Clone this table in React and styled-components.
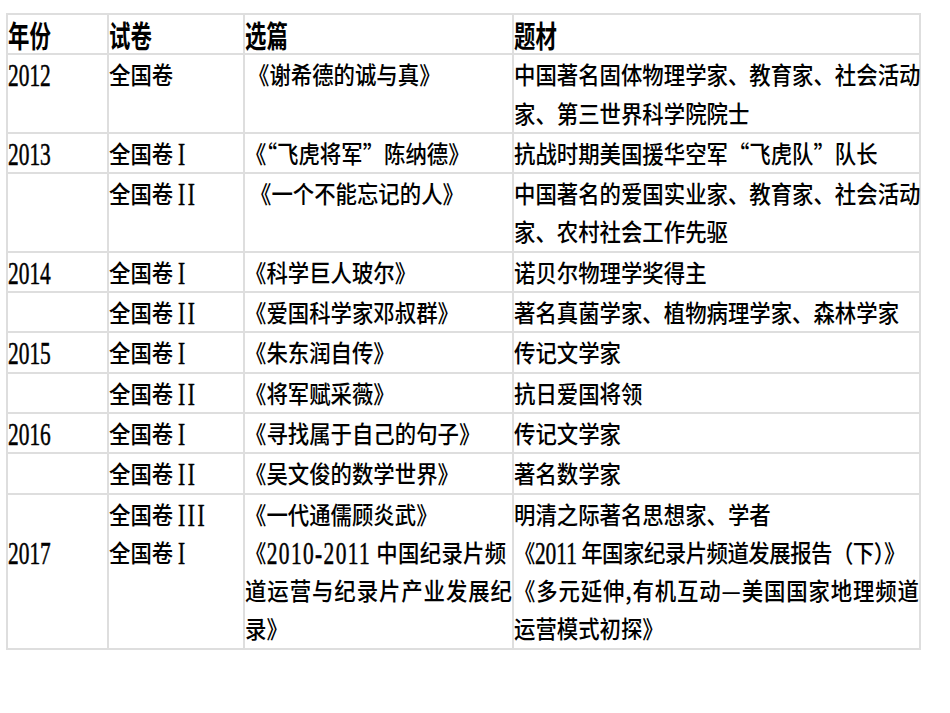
import React from 'react';
import styled, { createGlobalStyle, css } from 'styled-components';

const LH = 38.3;
const BORDER = '#dedede';

const Global = createGlobalStyle`
  html, body { margin: 0; padding: 0; background: #fff; }
  body {
    font-family: "Noto Sans CJK SC", "Liberation Serif", sans-serif;
    color: #000;
  }
  * { box-sizing: border-box; }
`;

const Page = styled.div`
  width: 950px;
  min-height: 713px;
  padding: 13px 0 0 6px;
`;

const Table = styled.table`
  border-collapse: separate;
  border-spacing: 0;
  table-layout: fixed;
  width: 915px;
  font-size: 21.4px;
  line-height: ${LH}px;
`;

const Cell = styled.td`
  border-right: 2px solid ${BORDER};
  border-bottom: 2px solid ${BORDER};
  &:first-child { border-left: 2px solid ${BORDER}; }
  padding: ${p => (p.$skip ? p.$skip * LH : 0)}px 0 0 ${p => p.$indent || 0}px;
  vertical-align: top;
  text-align: left;
  font-weight: 500;
  overflow: visible;
`;

const HeadCell = styled(Cell).attrs({ as: 'th' })`
  border-top: 2px solid ${BORDER};
  width: ${p => p.$w}px;
`;

const HeadText = styled.span`
  display: inline-block;
  line-height: 1;
  font-weight: 700;
  transform: scaleY(1.4);
`;

const Line = styled.div`
  white-space: nowrap;
  transform: scaleY(1.12);
  ${p => p.$justify && css`
    white-space: normal;
    text-align: justify;
    text-align-last: justify;
  `}
  ${p => p.$space && css`letter-spacing: ${p.$space}px;`}
`;

const Latin = styled.span`
  display: inline-block;
  font-family: "Liberation Serif", serif;
  font-weight: 400;
  line-height: 1;
  transform: scaleY(1.33);
  -webkit-text-stroke: 0.35px #000;
  letter-spacing: ${p => p.$track || 0}px;
`;

function renderText(text, track) {
  const parts = text.split(/([0-9][0-9\-]*|I+)/g);
  return parts.map((part, i) => {
    if (!part) return null;
    if (/^[0-9]/.test(part)) return <Latin key={i} $track={track}>{part}</Latin>;
    if (/^I+$/.test(part)) return <Latin key={i} $track={part.length > 1 ? 2.6 : 0}>{part}</Latin>;
    return <React.Fragment key={i}>{part}</React.Fragment>;
  });
}

function Lines({ items }) {
  return items.map((item, i) => {
    const it = typeof item === 'string' ? { t: item } : item;
    return (
      <Line key={i} $justify={it.j} $space={it.sp}>
        {renderText(it.t, it.tr)}
      </Line>
    );
  });
}

const headers = [
  { t: '年份', w: 103 },
  { t: '试卷', w: 136 },
  { t: '选篇', w: 269 },
  { t: '题材', w: 407 },
];

const rows = [
  { year: '2012', paper: ['全国卷'], piece: ['《谢希德的诚与真》'], pi: 3,
    topic: ['中国著名固体物理学家、教育家、社会活动', '家、第三世界科学院院士'] },
  { year: '2013', paper: ['全国卷 I'], piece: ['《“飞虎将军”陈纳德》'],
    topic: ['抗战时期美国援华空军“飞虎队”队长'] },
  { year: '', paper: ['全国卷 II'], piece: ['《一个不能忘记的人》'], pi: 5,
    topic: ['中国著名的爱国实业家、教育家、社会活动', '家、农村社会工作先驱'] },
  { year: '2014', paper: ['全国卷 I'], piece: ['《科学巨人玻尔》'], topic: ['诺贝尔物理学奖得主'] },
  { year: '', paper: ['全国卷 II'], piece: ['《爱国科学家邓叔群》'],
    topic: ['著名真菌学家、植物病理学家、森林学家'] },
  { year: '2015', paper: ['全国卷 I'], piece: ['《朱东润自传》'], topic: ['传记文学家'] },
  { year: '', paper: ['全国卷 II'], piece: ['《将军赋采薇》'], topic: ['抗日爱国将领'] },
  { year: '2016', paper: ['全国卷 I'], piece: ['《寻找属于自己的句子》'], topic: ['传记文学家'] },
  { year: '', paper: ['全国卷 II'], piece: ['《吴文俊的数学世界》'], topic: ['著名数学家'] },
  { year: '2017', skip: 1, paper: ['全国卷 III', '全国卷 I'],
    piece: [
      '《一代通儒顾炎武》',
      { t: '《2010-2011 中国纪录片频', tr: 1.4, sp: 0.3 },
      { t: '道运营与纪录片产业发展纪', j: true },
      '录》',
    ],
    topic: [
      '明清之际著名思想家、学者',
      { t: '《2011 年国家纪录片频道发展报告（下）》', sp: -0.5 },
      { t: '《多元延伸,有机互动—美国国家地理频道', j: true },
      '运营模式初探》',
    ] },
];

export default function App() {
  return (
    <Page>
      <Global />
      <Table>
        <thead>
          <tr>
            {headers.map(h => (
              <HeadCell key={h.t} $w={h.w}>
                <HeadText>{h.t}</HeadText>
              </HeadCell>
            ))}
          </tr>
        </thead>
        <tbody>
          {rows.map((r, i) => (
            <tr key={i}>
              <Cell $skip={r.skip}>
                {r.year && <Line>{renderText(r.year)}</Line>}
              </Cell>
              <Cell><Lines items={r.paper} /></Cell>
              <Cell $indent={r.pi}><Lines items={r.piece} /></Cell>
              <Cell><Lines items={r.topic} /></Cell>
            </tr>
          ))}
        </tbody>
      </Table>
    </Page>
  );
}
